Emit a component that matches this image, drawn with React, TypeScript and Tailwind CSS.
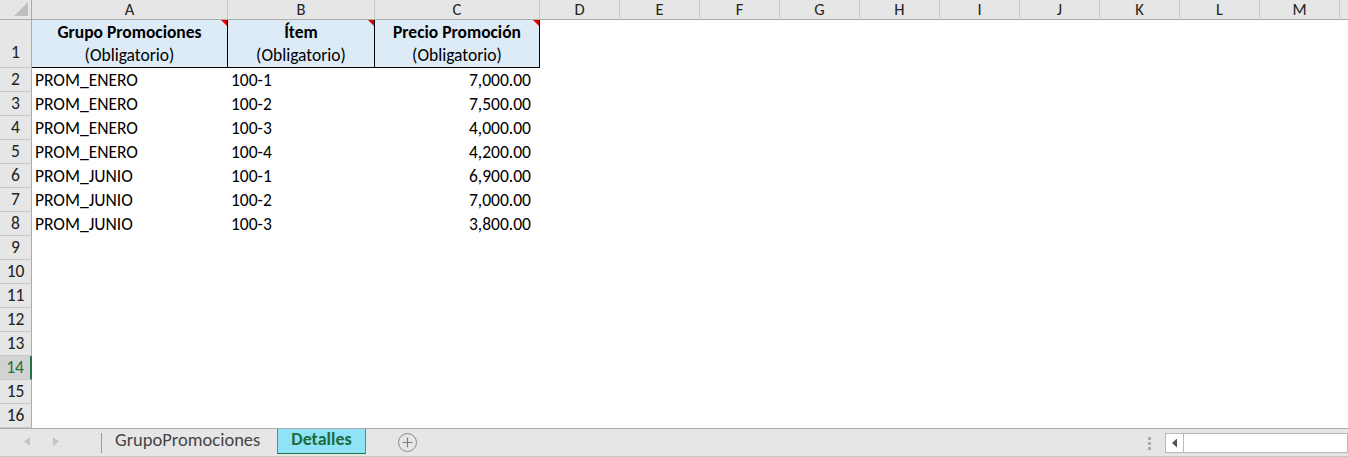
const COLS = ['A', 'B', 'C', 'D', 'E', 'F', 'G', 'H', 'I', 'J', 'K', 'L', 'M', ''];

const rows: [string, string, string][] = [
  ['PROM_ENERO', '100-1', '7,000.00'],
  ['PROM_ENERO', '100-2', '7,500.00'],
  ['PROM_ENERO', '100-3', '4,000.00'],
  ['PROM_ENERO', '100-4', '4,200.00'],
  ['PROM_JUNIO', '100-1', '6,900.00'],
  ['PROM_JUNIO', '100-2', '7,000.00'],
  ['PROM_JUNIO', '100-3', '3,800.00'],
];

const headers = ['Grupo Promociones', 'Ítem', 'Precio Promoción'];

function CommentMark() {
  return (
    <span className="absolute right-0 top-0 h-[6px] w-[6px] bg-[#e00000] [clip-path:polygon(0_0,100%_0,100%_100%)]" />
  );
}

function EmptyCells({ from }: { from: number }) {
  return (
    <>
      {COLS.slice(from).map((c, i) => (
        <div key={i + c} className="bg-white" />
      ))}
    </>
  );
}

export default function App() {
  const blank = Array.from({ length: 8 }, (_, i) => i + 9);

  return (
    <div className="flex h-[457px] w-[1348px] flex-col overflow-hidden bg-white font-['Carlito','Lato',sans-serif] text-[17.5px] text-black">
      <div className="grid flex-1 overflow-hidden [grid-template-columns:32px_196px_147px_165px_repeat(10,80px)_80px] [grid-template-rows:20px_48px_repeat(15,24px)]">
        {/* corner */}
        <div className="relative border-b border-r border-[#ababab] bg-[#e6e6e6]">
          <span className="absolute bottom-[3px] right-[3px] h-[14px] w-[14px] bg-[#bfbfbf] [clip-path:polygon(100%_0,100%_100%,0_100%)]" />
        </div>
        {COLS.map((c, i) => (
          <div
            key={i}
            className="flex items-center justify-center border-b border-r border-b-[#ababab] border-r-[#c8c8c8] bg-[#e6e6e6] text-[16.5px] leading-[19px] text-[#222]"
          >
            {c}
          </div>
        ))}

        {/* row 1 */}
        <div className="flex items-end justify-center border-b border-r border-b-[#c8c8c8] border-r-[#ababab] bg-[#e6e6e6] pb-[2px] text-[#222]">
          1
        </div>
        {headers.map((h) => (
          <div
            key={h}
            className="relative flex flex-col items-center justify-center border-b border-r border-black bg-[#ddebf7] leading-[23px]"
          >
            <CommentMark />
            <span className="font-bold">{h}</span>
            <span>(Obligatorio)</span>
          </div>
        ))}
        <EmptyCells from={3} />

        {rows.map((r, i) => (
          <div key={i} className="contents">
            <div className="flex items-center justify-center border-b border-r border-b-[#c8c8c8] border-r-[#ababab] bg-[#e6e6e6] text-[#222]">
              {i + 2}
            </div>
            <div className="flex items-center pl-[3px]">{r[0]}</div>
            <div className="flex items-center pl-[3px]">{r[1]}</div>
            <div className="flex items-center justify-end pr-[9px]">{r[2]}</div>
            <EmptyCells from={3} />
          </div>
        ))}

        {blank.map((n) => (
          <div key={n} className="contents">
            {n === 14 ? (
              <div className="flex items-center justify-center border-b border-r-2 border-b-[#c8c8c8] border-r-[#217346] bg-[#d2d2d2] text-[#217346]">
                {n}
              </div>
            ) : (
              <div className="flex items-center justify-center border-b border-r border-b-[#c8c8c8] border-r-[#ababab] bg-[#e6e6e6] text-[#222]">
                {n}
              </div>
            )}
            <EmptyCells from={0} />
          </div>
        ))}
      </div>

      {/* sheet tabs */}
      <div className="flex h-[29px] shrink-0 items-start border-t border-b border-t-[#ababab] border-b-[#c6c6c6] bg-[#e6e6e6]">
        <div className="flex h-[25px] w-[101px] items-center pl-[24px]">
          <span className="h-[9px] w-[6px] bg-[#c4c4c4] [clip-path:polygon(100%_0,100%_100%,0_50%)]" />
          <span className="ml-[23px] h-[9px] w-[6px] bg-[#c4c4c4] [clip-path:polygon(0_0,100%_50%,0_100%)]" />
        </div>
        <div className="mt-[4px] h-[20px] w-px bg-[#9a9a9a]" />
        <div className="flex h-[25px] w-[175px] items-center pb-[3px] pl-[13px] text-[18.5px] text-[#444]">GrupoPromociones</div>
        <div className="flex h-[25px] w-[89px] items-center justify-center border-x border-b border-x-[#7a7a7a] border-b-[#217346] bg-[#8fe3f7] pb-[3px] text-[18px] font-bold text-[#1e6b3e]">
          Detalles
        </div>
        <div className="ml-[32px] mt-[4px] flex h-[19px] w-[19px] items-center justify-center rounded-full border border-[#8a8a8a] text-[#8a8a8a]">
          <svg width="11" height="11" viewBox="0 0 11 11">
            <path d="M5.5 0.5v10M0.5 5.5h10" stroke="#808080" strokeWidth="1.2" />
          </svg>
        </div>
        <div className="flex-1" />
        <div className="mt-[8px] flex flex-col gap-[2px]">
          <span className="h-[3px] w-[3px] bg-[#a8a8a8]" />
          <span className="h-[3px] w-[3px] bg-[#a8a8a8]" />
          <span className="h-[3px] w-[3px] bg-[#a8a8a8]" />
        </div>
        <div className="ml-[14px] mt-[4px] flex h-[20px] w-[183px] border border-[#b8b8b8] bg-white">
          <div className="flex w-[18px] items-center justify-center border-r border-[#b8b8b8]">
            <span className="h-[9px] w-[5px] bg-[#505050] [clip-path:polygon(100%_0,100%_100%,0_50%)]" />
          </div>
        </div>
      </div>
    </div>
  );
}
